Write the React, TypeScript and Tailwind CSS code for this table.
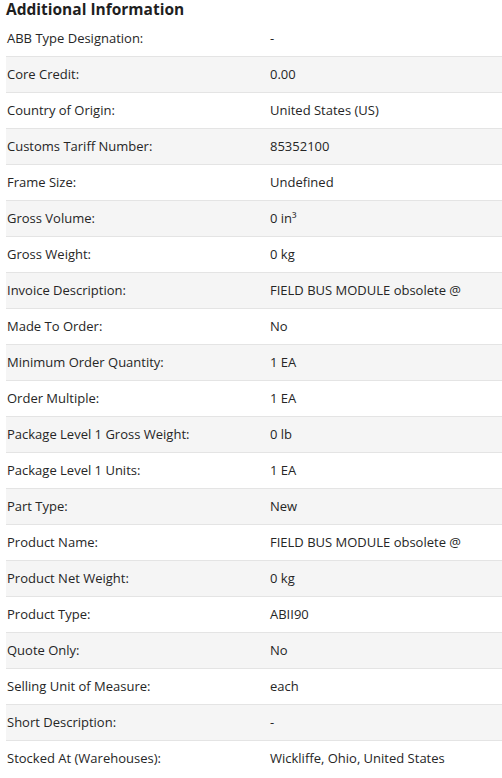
import React from 'react';

const rows: [string, React.ReactNode][] = [
  ['ABB Type Designation:', '-'],
  ['Core Credit:', '0.00'],
  ['Country of Origin:', 'United States (US)'],
  ['Customs Tariff Number:', '85352100'],
  ['Frame Size:', 'Undefined'],
  ['Gross Volume:', '0 in³'],
  ['Gross Weight:', '0 kg'],
  ['Invoice Description:', 'FIELD BUS MODULE obsolete @'],
  ['Made To Order:', 'No'],
  ['Minimum Order Quantity:', '1 EA'],
  ['Order Multiple:', '1 EA'],
  ['Package Level 1 Gross Weight:', '0 lb'],
  ['Package Level 1 Units:', '1 EA'],
  ['Part Type:', 'New'],
  ['Product Name:', 'FIELD BUS MODULE obsolete @'],
  ['Product Net Weight:', '0 kg'],
  ['Product Type:', 'ABII90'],
  ['Quote Only:', 'No'],
  ['Selling Unit of Measure:', 'each'],
  ['Short Description:', '-'],
  ['Stocked At (Warehouses):', 'Wickliffe, Ohio, United States'],
];

export default function App() {
  return (
    <div className="w-[502px] h-[778px] overflow-hidden bg-white pl-[6px] text-[#262626] font-['Open_Sans',sans-serif]">
      {/* Heading */}
      <h2 className="h-[21px] text-[15.5px] leading-[18px] font-bold text-[#1f1f1f]">
        Additional Information
      </h2>

      {/* Info table */}
      <div className="w-[520px]">
        {rows.map(([label, value], i) => (
          <div
            key={label}
            className={`flex items-center h-[36px] text-[13px] ${
              i < rows.length - 1 ? 'border-b border-[#e4e4e4]' : ''
            } ${i % 2 === 1 ? 'bg-[#f5f5f5]' : 'bg-white'}`}
          >
            <div className="w-[264px] shrink-0 pl-px">{label}</div>
            <div>{value}</div>
          </div>
        ))}
      </div>
    </div>
  );
}
